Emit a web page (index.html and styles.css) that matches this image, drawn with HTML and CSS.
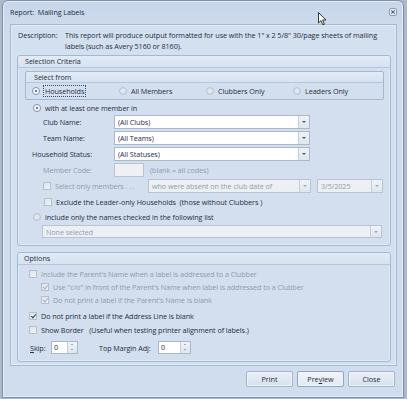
FILE: index.html
```html
<!DOCTYPE html>
<html lang="en">
<head>
  <meta charset="UTF-8" />
  <title>Report: Mailing Labels</title>
  <link rel="stylesheet" href="styles.css">
</head>
<body>
  <div class="window">
    <div class="titlebar">
      <span class="title">Report:&nbsp; Mailing Labels</span>
      <span class="close">
        <svg width="8" height="8" viewBox="0 0 8 8"><rect x="0.5" y="0.5" width="7" height="7" rx="1.5" fill="#e9eef5" stroke="#8c9bb0"/><path d="M2.3 2.3 L5.7 5.7 M5.7 2.3 L2.3 5.7" stroke="#55657c" stroke-width="1.1"/></svg>
      </span>
    </div>

    <div class="client">
      <div class="desc">
        <span class="desc-label">Description:</span>
        <span class="desc-text">This report will produce output formatted for use with the 1" x 2 5/8" 30/page sheets of mailing labels (such as Avery 5160 or 8160).</span>
      </div>

      <div class="group selection">
        <div class="group-head">Selection Criteria</div>
        <div class="subgroup">
          <div class="group-head sub">Select from</div>
          <div class="radio-row">
            <div class="opt"><span class="radio on"></span><span class="focus">Households</span></div>
            <div class="opt"><span class="radio"></span>All Members</div>
            <div class="opt"><span class="radio"></span>Clubbers Only</div>
            <div class="opt"><span class="radio"></span>Leaders Only</div>
          </div>
        </div>

        <div class="row r-with"><span class="radio on"></span>with at least one member in</div>

        <div class="row field">
          <span class="flabel">Club Name:</span>
          <div class="combo wide"><span class="ctext">(All Clubs)</span><span class="cbtn"></span></div>
        </div>
        <div class="row field">
          <span class="flabel">Team Name:</span>
          <div class="combo wide"><span class="ctext">(All Teams)</span><span class="cbtn"></span></div>
        </div>
        <div class="row field">
          <span class="flabel hs">Household Status:</span>
          <div class="combo wide"><span class="ctext">(All Statuses)</span><span class="cbtn"></span></div>
        </div>
        <div class="row field dis">
          <span class="flabel">Member Code:</span>
          <div class="textbox code"></div>
          <span class="hint">(blank = all codes)</span>
        </div>
        <div class="row r-only dis">
          <span class="check"></span>
          <span class="only-label">Select only members . . .</span>
          <div class="combo absent disabled"><span class="ctext">who were absent on the club date of</span><span class="cbtn"></span></div>
          <div class="combo date disabled"><span class="ctext">3/5/2025</span><span class="cbtn"></span></div>
        </div>
        <div class="row r-excl"><span class="check"></span>Exclude the Leader-only Households&nbsp; (those without Clubbers )</div>
        <div class="row r-incl"><span class="radio"></span>include only the names checked in the following list</div>
        <div class="row r-none">
          <div class="combo none disabled"><span class="ctext">None selected</span><span class="cbtn"></span></div>
        </div>
      </div>

      <div class="group options">
        <div class="group-head">Options</div>
        <div class="row o1 dis"><span class="check"></span>Include the Parent's Name when a label is addressed to a Clubber</div>
        <div class="row o2 dis"><span class="check on"></span>Use "c/o" in front of the Parent's Name when label is addressed to a Clubber</div>
        <div class="row o3 dis"><span class="check on"></span>Do not print a label if the Parent's Name is blank</div>
        <div class="row o4"><span class="check on"></span>Do not print a label if the Address Line is blank</div>
        <div class="row o5"><span class="check"></span>Show Border&nbsp;&nbsp; (Useful when testing printer alignment of labels.)</div>
        <div class="row o6">
          <span class="skip-label"><u>S</u>kip:</span>
          <div class="spin s-skip"><span class="stext">0</span><span class="sbtn"></span></div>
          <span class="margin-label">Top Margin Adj:</span>
          <div class="spin s-margin"><span class="stext">0</span><span class="sbtn"></span></div>
        </div>
      </div>
    </div>

    <div class="buttons">
      <button class="btn">Print</button>
      <button class="btn default">Pre<u>v</u>iew</button>
      <button class="btn">Close</button>
    </div>
  </div>

  <svg class="cursor" width="9" height="14" viewBox="0 0 9 14">
    <path d="M0.5 0.5 L0.5 11 L3 8.6 L4.8 12.8 L6.4 12.1 L4.6 8 L8 8 Z" fill="#fff" stroke="#222" stroke-width="0.9" stroke-linejoin="round"/>
  </svg>
</body>
</html>
```

FILE: styles.css
```css
body {
  margin: 0;
  background: #aeb9c6;
  font-family: "Open Sans", "Noto Sans", sans-serif;
  font-size: 7.2px;
  letter-spacing: -0.06px;
  color: #1f2d42;
}
.window {
  position: relative;
  margin-left: 2px;
  width: 400px;
  height: 396px;
  background: linear-gradient(#c7d6e9, #d0ddee 40px, #d0ddee);
  border: 1px solid #7d91ab;
  border-radius: 6px 6px 0 0;
  box-shadow: inset 0 0 0 1px #e4ecf6;
}
.titlebar {
  display: flex;
  align-items: center;
  justify-content: space-between;
  height: 22px;
  padding: 0 6px 0 7px;
}
.close {
  display: flex;
  margin-top: -1px;
}
.client {
  margin: 1px 6px 0 7px;
  height: 340px;
  border: 1px solid #a5b9d0;
  background: #d3e0ef;
  box-shadow: inset 0 0 0 1px #e2eaf5;
  padding: 0 5px 0 6px;
}
.desc {
  display: flex;
  height: 30px;
  padding-top: 5px;
  box-sizing: border-box;
  line-height: 11px;
}
.desc-label {
  width: 47px;
  flex: none;
  padding-left: 1px;
}
.group {
  border: 1px solid #a3b8d1;
  border-radius: 3px;
  background: #d3dfee;
  box-shadow: inset 0 0 0 1px #e0e9f4;
}
.group-head {
  height: 11px;
  line-height: 11px;
  padding-left: 7px;
  background: linear-gradient(#e2ebf6, #d6e2f0);
  border-bottom: 1px solid #b4c7dc;
  border-radius: 3px 3px 0 0;
}
.options .group-head {
  padding-left: 6px;
}
.selection {
  height: 189px;
}
.options {
  margin-top: 6px;
  height: 108px;
}
.subgroup {
  margin: 3px 6px 2px 7px;
  height: 27px;
  border: 1px solid #a3b8d1;
  border-radius: 2px;
}
.group-head.sub {
  padding-left: 8px;
  height: 10px;
  line-height: 10px;
}
.radio-row {
  display: flex;
  align-items: center;
  height: 16px;
  padding-left: 6px;
}
.opt {
  display: flex;
  align-items: center;
  width: 87px;
}
.radio {
  flex: none;
  width: 6px;
  height: 6px;
  border-radius: 50%;
  border: 1px solid #b7c3d2;
  background: radial-gradient(#e8edf3, #cfd8e3);
  margin-right: 4px;
}
.radio.on {
  border-color: #8193ab;
  background: radial-gradient(circle, #6a7c94 0 1.3px, #fbfcfe 1.6px);
}
.focus {
  outline: 1px dotted #3b4b61;
  padding: 0 1px;
}
.row {
  display: flex;
  align-items: center;
}
.r-with {
  height: 12px;
  margin-top: 1px;
  padding-left: 15px;
}
.field {
  height: 16px;
}
.flabel {
  box-sizing: border-box;
  width: 96px;
  padding-left: 25px;
  flex: none;
}
.flabel.hs {
  padding-left: 14px;
}
.combo {
  display: flex;
  height: 14px;
  box-sizing: border-box;
  border: 1px solid #a9b8ca;
  background: #fff;
}
.combo.wide {
  width: 196px;
}
.ctext {
  flex: 1;
  padding-left: 3px;
  line-height: 12px;
  white-space: nowrap;
  overflow: hidden;
}
.cbtn {
  width: 10px;
  flex: none;
  border-left: 1px solid #c3cedb;
  background: linear-gradient(#eff3f8, #dfe6ee);
  position: relative;
}
.cbtn::after {
  content: "";
  position: absolute;
  left: 3px;
  top: 5px;
  border-left: 2px solid transparent;
  border-right: 2px solid transparent;
  border-top: 2px solid #4c5a6c;
}
.combo.disabled {
  background: #eceff3;
  border-color: #b9c4d1;
}
.combo.disabled .ctext {
  color: #939fae;
}
.combo.disabled .cbtn::after {
  border-top-color: #a2acb8;
}
.dis {
  color: #8e9aab;
}
.textbox.code {
  width: 28px;
  height: 12px;
  background: #eef0f3;
  border: 1px solid #b9c4d1;
}
.hint {
  margin-left: 6px;
}
.check {
  flex: none;
  width: 6px;
  height: 6px;
  border: 1px solid #b3bfcd;
  background: linear-gradient(135deg, #dde3ea, #f1f4f8);
  margin-right: 4px;
  position: relative;
}
.check.on::after {
  content: "";
  position: absolute;
  left: 1.5px;
  top: 0;
  width: 2px;
  height: 4px;
  border-right: 1.2px solid #2b3a50;
  border-bottom: 1.2px solid #2b3a50;
  transform: rotate(40deg);
}
.dis .check.on::after {
  border-color: #a5b0bd;
}
.r-only {
  height: 16px;
  padding-left: 25px;
}
.only-label {
  width: 93px;
  flex: none;
}
.combo.absent {
  width: 163px;
}
.combo.date {
  width: 66px;
  margin-left: 6px;
}
.r-excl {
  height: 15px;
  padding-left: 26px;
}
.r-incl {
  height: 15px;
  padding-left: 15px;
}
.r-none {
  height: 15px;
  padding-left: 24px;
}
.combo.none {
  width: 340px;
  height: 13px;
}
.o1 {
  margin-top: 2px;
  height: 13px;
  padding-left: 11px;
}
.o2, .o3 {
  height: 13px;
  padding-left: 23px;
}
.o3 {
  height: 14px;
}
.o4 {
  margin-top: 2px;
  height: 14px;
  padding-left: 11px;
}
.o5 {
  height: 13px;
  padding-left: 11px;
}
.o6 {
  margin-top: 5px;
  height: 13px;
  padding-left: 12px;
}
.skip-label {
  width: 21px;
  flex: none;
}
.margin-label {
  margin-left: 21px;
  width: 59px;
  flex: none;
}
.spin {
  display: flex;
  height: 13px;
  box-sizing: border-box;
  border: 1px solid #a9b8ca;
  background: #fff;
}
.s-skip {
  width: 27px;
}
.s-margin {
  width: 33px;
}
.stext {
  flex: 1;
  padding-left: 2px;
  line-height: 11px;
}
.sbtn {
  width: 9px;
  border-left: 1px solid #c3cedb;
  background: linear-gradient(#eff3f8, #dfe6ee);
  position: relative;
}
.sbtn::before, .sbtn::after {
  content: "";
  position: absolute;
  left: 3px;
  border-left: 1.5px solid transparent;
  border-right: 1.5px solid transparent;
}
.sbtn::before {
  top: 2px;
  border-bottom: 1.5px solid #5a687a;
}
.sbtn::after {
  top: 7px;
  border-top: 1.5px solid #5a687a;
}
.buttons {
  display: flex;
  justify-content: flex-end;
  gap: 4px;
  margin-top: 5px;
  padding-right: 8px;
}
.btn {
  width: 47px;
  height: 16px;
  padding: 0;
  font-family: inherit;
  font-size: 7.2px;
  color: #1f2d42;
  border: 1px solid #a2b4c9;
  border-radius: 2px;
  background: linear-gradient(#e9eff7, #d6e1ee);
  box-shadow: inset 0 0 0 1px #f2f6fb;
}
.btn.default {
  border-color: #8ea5c0;
  background: linear-gradient(#f1f5fa, #e1e9f3);
}
.cursor {
  position: absolute;
  left: 318px;
  top: 12px;
}
```
